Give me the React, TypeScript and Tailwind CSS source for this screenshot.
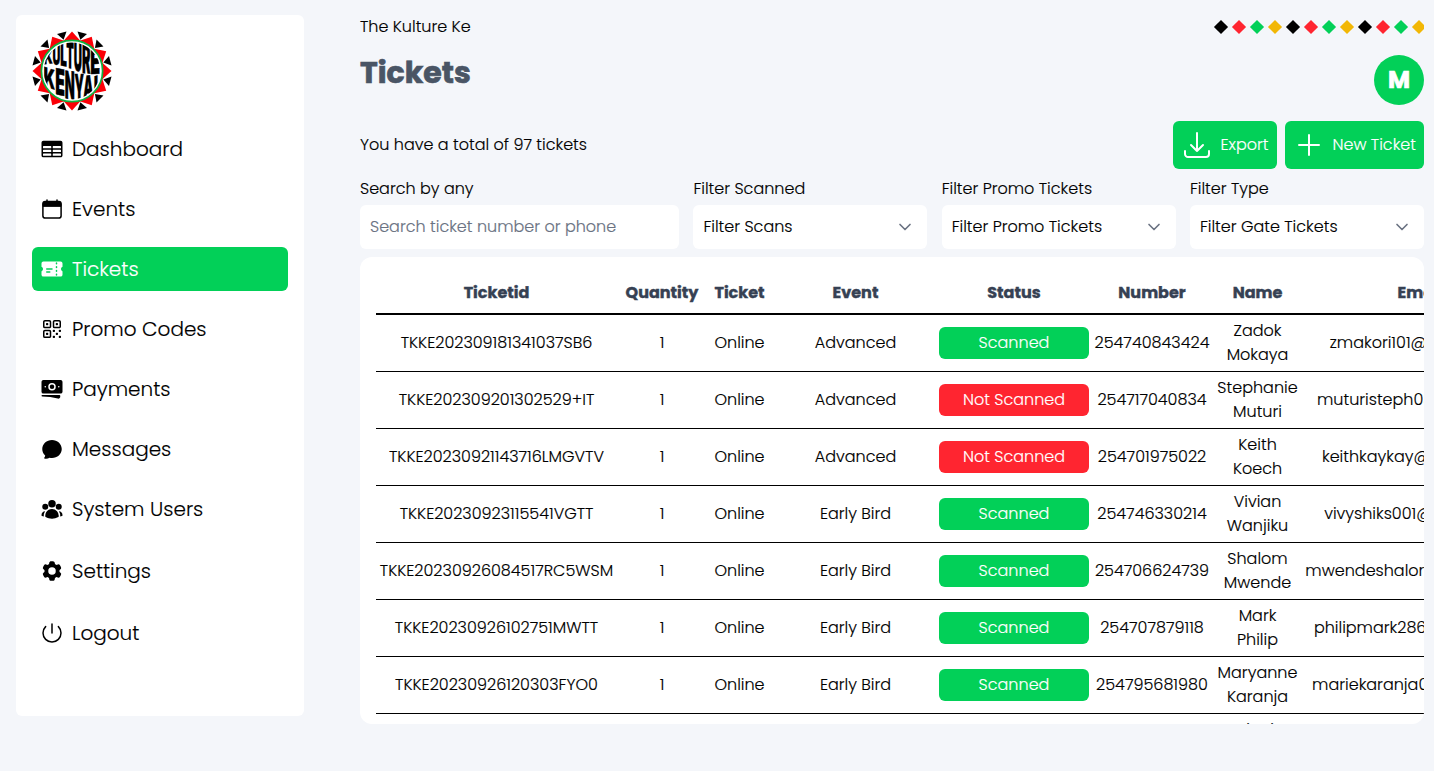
import type { ReactNode } from "react";
import {
  HiTableCells,
  HiTicket,
  HiQrCode,
  HiBanknotes,
  HiUserGroup,
  HiOutlineArrowDownTray,
  HiOutlinePlus,
  HiOutlinePower,
  HiChatBubbleOvalLeft,
  HiCog6Tooth,
  HiOutlineChevronDown,
} from "react-icons/hi2";

const range = (n: number) => Array.from({ length: n }, (_, i) => i);

// Each letter is stretched between the ring and the wave that splits the two words:
// [letter, left, width, top, baseline, skew]
const topWord: [string, number, number, number, number, number][] = [
  ["K", -28.5, 9.3, -21, -6.5, -6],
  ["U", -19.6, 7.8, -26, -6, 0],
  ["L", -11.8, 6.6, -29, -5.5, 10],
  ["T", -5.7, 7.6, -29.5, -3.5, 10],
  ["U", 1.8, 8.2, -29.5, -0.8, 10],
  ["R", 9.9, 8.4, -28, 2, 5],
  ["E", 18.2, 9.8, -22, 3, -2],
];
const bottomWord: [string, number, number, number, number, number][] = [
  ["K", -28.5, 11.5, -4.5, 15, 18],
  ["E", -16.8, 9.6, -3.2, 23, 12],
  ["N", -7.2, 10, -0.4, 27.5, 7],
  ["Y", 2.6, 9.4, 2.4, 29.5, 0],
  ["A", 11.2, 10, 5.4, 27.5, -10],
  ["I", 21.8, 4.4, 5.5, 20, -18],
];

function Logo() {
  return (
    <svg viewBox="-40 -40 80 80" className="size-20">
      <clipPath id="disc">
        <circle r="28.4" />
      </clipPath>
      {range(12).map((i) => (
        <path key={i} transform={`rotate(${i * 30})`} d="M0 -39.5 L9 -29.5 L-9 -29.5 Z" fill="#fb0007" />
      ))}
      {range(12).map((i) => (
        <path
          key={i}
          transform={`rotate(${i * 30 + 15})`}
          d="M-4.9 -39.6 L4.9 -39.6 L0 -32.4 Z"
          fill="#000"
        />
      ))}
      <circle r="30.6" fill="#fff" stroke="#0fb140" strokeWidth="1.7" />
      <g clipPath="url(#disc)">
        {[...topWord, ...bottomWord].map(([ch, x, w, y0, y1, skew], i) => (
          <text
            key={i}
            transform={`translate(${x} ${y1}) skewY(${skew}) scale(${w / 7} ${(y1 - y0) / 7.27})`}
            fontSize="10"
            fontWeight="900"
            fontFamily="Inter"
            textLength="7"
            lengthAdjust="spacingAndGlyphs"
            stroke="#000"
            strokeWidth="0.15"
          >
            {ch}
          </text>
        ))}
      </g>
    </svg>
  );
}

function CalendarIcon() {
  return (
    <svg viewBox="0 0 24 24" className="size-6" fill="none" stroke="currentColor" strokeWidth="1.5" strokeLinecap="round">
      <rect x="2.9" y="4.6" width="18.2" height="16.5" rx="2.4" />
      <path d="M3 9V7a2.4 2.4 0 0 1 2.4-2.4h13.2A2.4 2.4 0 0 1 21 7v2z" fill="currentColor" strokeWidth="1" />
      <path d="M7 2.9v2M17 2.9v2" />
    </svg>
  );
}

const nav: { label: string; icon: ReactNode; space: string; active?: boolean }[] = [
  { label: "Dashboard", icon: <HiTableCells />, space: "mb-4" },
  { label: "Events", icon: <CalendarIcon />, space: "mb-4" },
  { label: "Tickets", icon: <HiTicket />, space: "mb-4", active: true },
  { label: "Promo Codes", icon: <HiQrCode />, space: "mb-4" },
  { label: "Payments", icon: <HiBanknotes />, space: "mb-4" },
  { label: "Messages", icon: <HiChatBubbleOvalLeft />, space: "mb-4" },
  { label: "System Users", icon: <HiUserGroup />, space: "mb-[18px]" },
  { label: "Settings", icon: <HiCog6Tooth />, space: "mb-[18px]" },
  { label: "Logout", icon: <HiOutlinePower />, space: "" },
];

function Sidebar() {
  return (
    <aside className="mt-[15px] ml-4 h-[701px] w-72 shrink-0 rounded-md bg-white p-4">
      <Logo />
      <nav className="mt-4 flex flex-col">
        {nav.map((n) => (
          <a
            key={n.label}
            className={`flex h-11 items-center gap-2 rounded-md px-2 text-xl ${n.space} ${n.active ? "bg-[#02d058] text-white" : "text-black"}`}
          >
            <span className="text-2xl">{n.icon}</span>
            {n.label}
          </a>
        ))}
      </nav>
    </aside>
  );
}

const diamonds = ["bg-black", "bg-[#ff2530]", "bg-[#02d058]", "bg-[#f2b705]"];

const filters = [
  { label: "Filter Scanned", value: "Filter Scans" },
  { label: "Filter Promo Tickets", value: "Filter Promo Tickets" },
  { label: "Filter Type", value: "Filter Gate Tickets" },
];

const headers = ["Ticketid", "Quantity", "Ticket", "Event", "Status", "Number", "Name", "Email"];

const rows: [string, string, boolean, string, string, string, string][] = [
  ["TKKE202309181341037SB6", "Advanced", true, "254740843424", "Zadok", "Mokaya", "zmakori101@gmail.com"],
  ["TKKE202309201302529+IT", "Advanced", false, "254717040834", "Stephanie", "Muturi", "muturisteph0@gmail.com"],
  ["TKKE20230921143716LMGVTV", "Advanced", false, "254701975022", "Keith", "Koech", "keithkaykay@yahoo.com"],
  ["TKKE20230923115541VGTT", "Early Bird", true, "254746330214", "Vivian", "Wanjiku", "vivyshiks001@gmail.com"],
  ["TKKE20230926084517RC5WSM", "Early Bird", true, "254706624739", "Shalom", "Mwende", "mwendeshalom@gmail.com"],
  ["TKKE20230926102751MWTT", "Early Bird", true, "254707879118", "Mark", "Philip", "philipmark286@gmail.com"],
  ["TKKE20230926120303FYO0", "Early Bird", true, "254795681980", "Maryanne", "Karanja", "mariekaranja0@gmail.com"],
  ["TKKE20230926131122QWEA", "Early Bird", true, "254712345678", "Winnie", "Moraa", "winniemoraa@gmail.com"],
];

function Tickets() {
  return (
    <div className="mt-2 h-[467px] overflow-hidden rounded-xl bg-white p-4 pr-0">
      <table className="w-[1165px] table-fixed border-collapse text-center">
        <colgroup>
          <col className="w-[241px]" />
          <col className="w-[90px]" />
          <col className="w-[65px]" />
          <col className="w-[167px]" />
          <col className="w-[150px]" />
          <col className="w-[126px]" />
          <col className="w-[85px]" />
          <col className="w-[241px]" />
        </colgroup>
        <thead>
          <tr className="h-[41px] border-b-2 border-black text-gray-700">
            {headers.map((h) => (
              <th key={h} className="p-0 font-bold [-webkit-text-stroke:0.4px]">
                {h}
              </th>
            ))}
          </tr>
        </thead>
        <tbody>
          {rows.map(([id, event, scanned, phone, first, last, email]) => (
            <tr key={id} className="h-[57px] border-b border-black">
              <td>{id}</td>
              <td>1</td>
              <td>Online</td>
              <td>{event}</td>
              <td>
                <div className={`rounded-md py-1 text-white ${scanned ? "bg-[#02d058]" : "bg-[#ff2530]"}`}>
                  {scanned ? "Scanned" : "Not Scanned"}
                </div>
              </td>
              <td>{phone}</td>
              <td>
                {first}
                <br />
                {last}
              </td>
              <td className="whitespace-nowrap">{email}</td>
            </tr>
          ))}
        </tbody>
      </table>
    </div>
  );
}

export default function App() {
  return (
    <div className="flex h-[771px] overflow-hidden bg-[#f4f6fa] font-['Poppins','Inter',sans-serif] text-base font-light text-black [-webkit-text-stroke:0.15px]">
      <Sidebar />
      <main className="mt-[15px] ml-11 w-[1076px] overflow-hidden pl-3">
        <div className="flex h-6 items-center justify-between">
          <p>The Kulture Ke</p>
          <div className="flex gap-2">
            {range(12).map((i) => (
              <span key={i} className={`size-2.5 rotate-45 ${diamonds[i % 4]}`} />
            ))}
          </div>
        </div>
        <div className="mt-4 flex items-start justify-between">
          <h1 className="text-3xl font-bold text-gray-600 [-webkit-text-stroke:0.7px]">Tickets</h1>
          <div className="flex size-[50px] items-center justify-center rounded-full bg-[#02d058] text-2xl font-bold text-white [-webkit-text-stroke:0.7px]">
            M
          </div>
        </div>
        <div className="mt-4 flex items-center justify-between">
          <p>You have a total of 97 tickets</p>
          <div className="flex gap-2 text-white">
            <button className="flex h-12 items-center gap-2 rounded-md bg-[#02d058] px-2">
              <HiOutlineArrowDownTray className="size-8" />
              Export
            </button>
            <button className="flex h-12 items-center gap-2 rounded-md bg-[#02d058] px-2">
              <HiOutlinePlus className="size-8" />
              New Ticket
            </button>
          </div>
        </div>
        <div className="mt-2 flex justify-between">
          <label className="flex w-[30%] flex-col gap-1">
            Search by any
            <input
              placeholder="Search ticket number or phone"
              className="h-11 rounded-md bg-white px-2.5 pb-0.5 placeholder:text-gray-500"
            />
          </label>
          {filters.map((f) => (
            <div key={f.label} className="flex w-[22%] flex-col gap-1">
              <span>{f.label}</span>
              <div className="flex h-11 items-center justify-between rounded-md bg-white pr-3.5 pl-2.5">
                {f.value}
                <HiOutlineChevronDown className="size-4 stroke-[2.5] text-gray-500" />
              </div>
            </div>
          ))}
        </div>
        <Tickets />
      </main>
    </div>
  );
}
